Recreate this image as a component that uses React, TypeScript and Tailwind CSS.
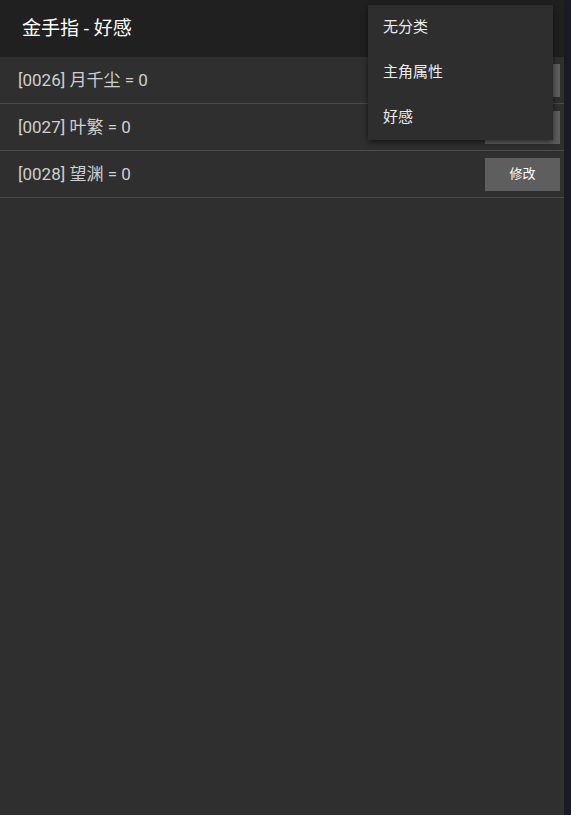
import React from "react";

const rows = [
  { id: "0026", name: "月千尘", v: 0 },
  { id: "0027", name: "叶繁", v: 0 },
  { id: "0028", name: "望渊", v: 0 },
];

export default function App() {
  return (
    <div
      className="relative flex h-[815px] w-[571px] overflow-hidden bg-[#1a1a24]"
      style={{ fontFamily: 'Roboto, "Noto Sans CJK SC", sans-serif' }}
    >
      <div className="flex w-[564px] flex-col bg-[#2f2f2f]">
        <div className="flex h-[57px] items-center bg-[#202020] pl-[22px] pt-[2px] text-[19px] text-white">
          金手指 - 好感
        </div>
        <div className="flex flex-col">
          {rows.map((r) => (
            <div
              key={r.id}
              className="flex h-[47px] items-center justify-between border-b border-[#4a4a4a] pl-[18px] pr-[4px]"
            >
              <span className="pt-[2px] text-[17px] text-[#cfcfcf]">
                [{r.id}] {r.name} = {r.v}
              </span>
              <button className="flex h-[33px] w-[75px] items-center justify-center bg-[#5e5e5e] text-[13px] text-white">
                修改
              </button>
            </div>
          ))}
        </div>
      </div>
      <div className="absolute left-[368px] top-[5px] flex w-[185px] flex-col bg-[#2e2e2e] shadow-[0_2px_6px_rgba(0,0,0,0.6)]">
        {["无分类", "主角属性", "好感"].map((t) => (
          <div key={t} className="flex h-[45px] items-center pl-[15px] text-[15px] text-[#ececec]">
            {t}
          </div>
        ))}
      </div>
    </div>
  );
}
